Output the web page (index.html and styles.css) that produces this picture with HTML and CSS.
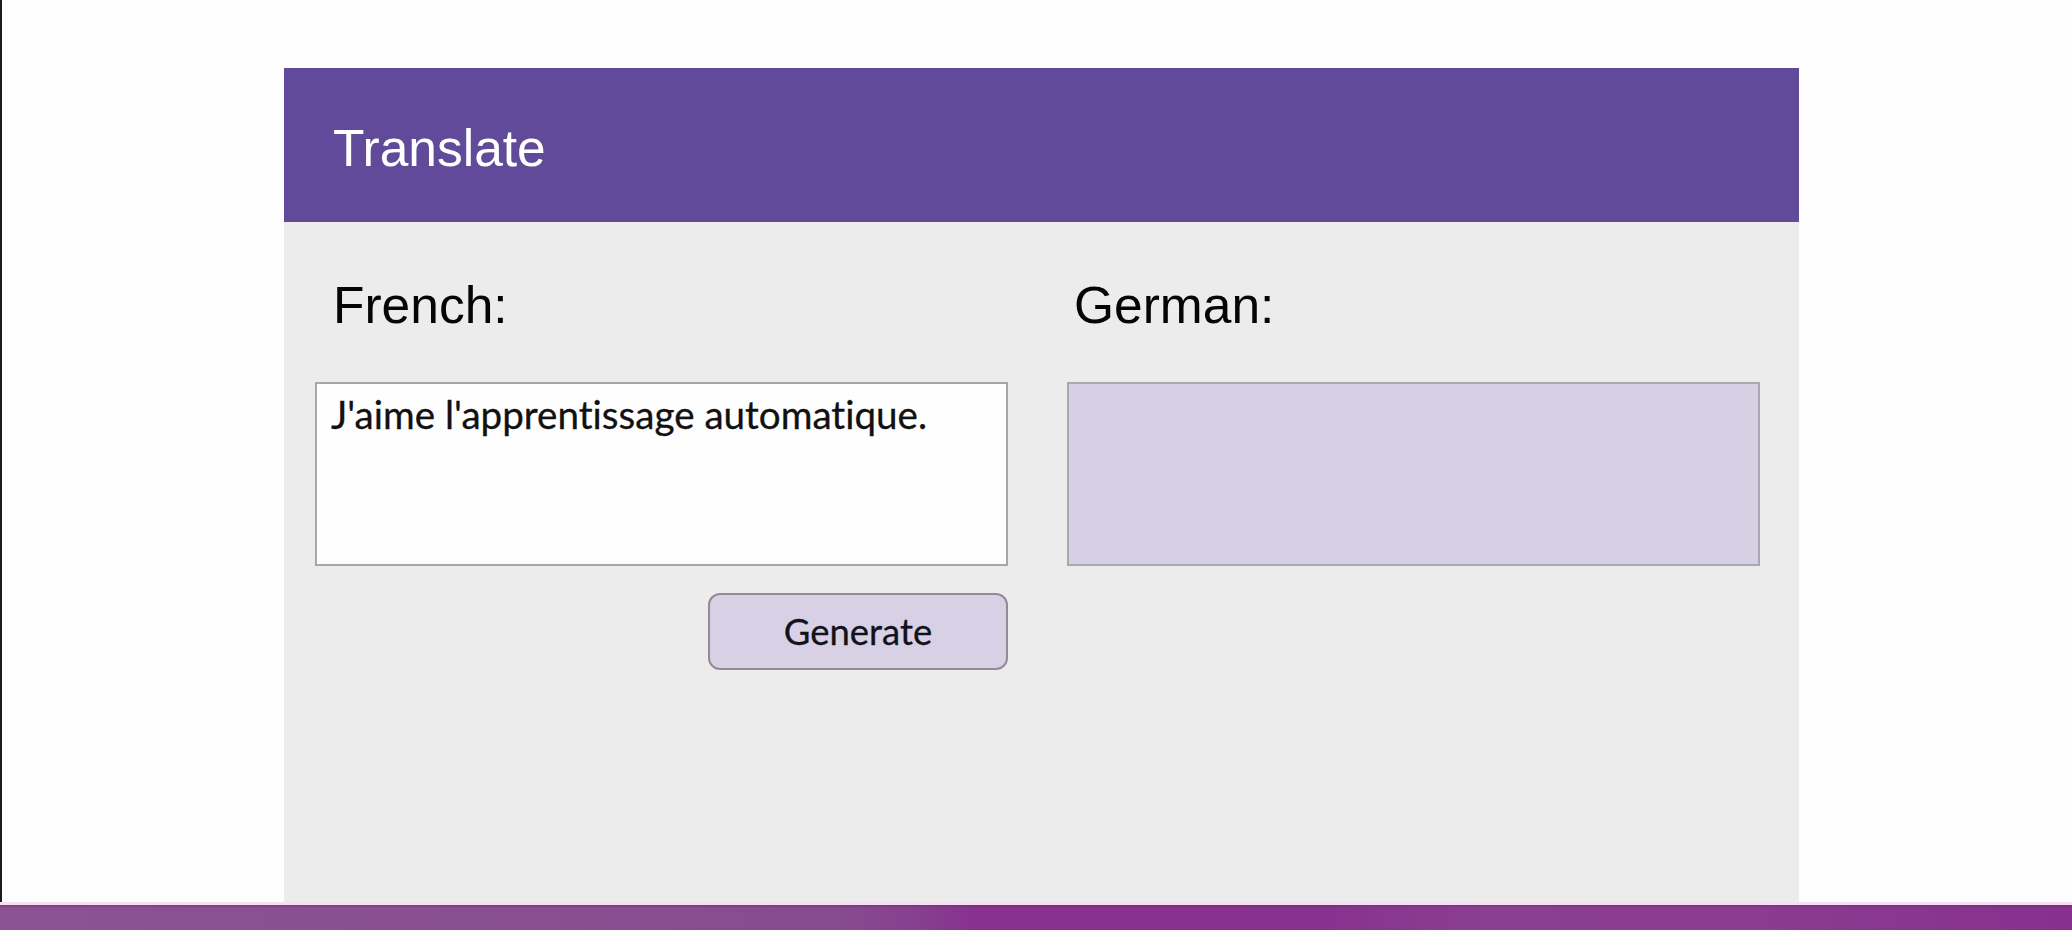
FILE: index.html
```html
<!DOCTYPE html>
<html lang="fr">
<head>
<meta charset="utf-8">
<title>Translate</title>
<link rel="stylesheet" href="styles.css">
</head>
<body>
<div class="screen">
  <div class="card">
    <div class="card-header">Translate</div>
    <div class="card-body">
      <div class="column">
        <div class="label label-src">French:</div>
        <div class="textbox textbox-src">J'aime l'apprentissage automatique.</div>
        <button class="generate" type="button">Generate</button>
      </div>
      <div class="column">
        <div class="label label-dst">German:</div>
        <div class="textbox textbox-dst"></div>
      </div>
    </div>
  </div>
</div>
<div class="divider"></div>
<div class="bar"></div>
</body>
</html>
```
FILE: styles.css
```css
html, body {
  margin: 0;
  padding: 0;
}
body {
  background: #fefefe;
  font-family: "Liberation Sans", Arial, sans-serif;
  overflow: hidden;
}
.screen {
  box-sizing: border-box;
  height: 902px;
  border-left: 2px solid #1b1b1b;
  padding-top: 68px;
  padding-left: 282px;
}
.card {
  width: 1515px;
  display: flex;
  flex-direction: column;
}
.card-header {
  box-sizing: border-box;
  height: 154px;
  background: #604a99;
  color: #ffffff;
  font-size: 51.5px;
  line-height: 50px;
  padding: 55px 0 0 49px;
}
.card-body {
  box-sizing: border-box;
  height: 680px;
  background: #ececec;
  padding: 58px 39px 0 31px;
  display: grid;
  grid-template-columns: 693px 693px;
  column-gap: 59px;
  align-items: start;
}
.column {
  display: flex;
  flex-direction: column;
}
.label {
  font-size: 51.5px;
  line-height: 50px;
  color: #050505;
  height: 50px;
}
.label-src {
  margin-left: 18px;
}
.label-dst {
  margin-left: 7px;
}
.textbox {
  box-sizing: border-box;
  margin-top: 52px;
  height: 184px;
  border: 2px solid #a7a7a7;
  padding: 11px 14px;
  font-family: Lato, "Open Sans", sans-serif;
  font-variant-ligatures: none;
  font-size: 38.6px;
  line-height: 1;
  color: #111111;
  -webkit-text-stroke: 0.3px #111111;
}
.textbox-src {
  background: #fefefe;
}
.textbox-dst {
  background: #d6d0e4;
  border-color: #aaa7b2;
}
.generate {
  box-sizing: border-box;
  align-self: flex-end;
  margin-top: 27px;
  width: 300px;
  height: 77px;
  border: 2px solid #8f8c95;
  border-radius: 12px;
  background: #d8d1e6;
  font-family: Lato, "Open Sans", sans-serif;
  font-variant-ligatures: none;
  font-size: 36.5px;
  line-height: 1;
  color: #12121a;
  -webkit-text-stroke: 0.3px #12121a;
  padding: 0;
  display: flex;
  align-items: center;
  justify-content: center;
}
.divider {
  height: 3px;
  background: #f4e0f2;
}
.bar {
  height: 25px;
  background: linear-gradient(90deg, #8b5393 0%, #874c8f 40%, #86418e 44%, #88318f 47%, #88328f 64%, #8a3f92 72%, #8a3c91 85%, #87308e 100%);
  box-shadow: inset 0 2px 0 rgba(110, 40, 110, 0.35);
}
```
